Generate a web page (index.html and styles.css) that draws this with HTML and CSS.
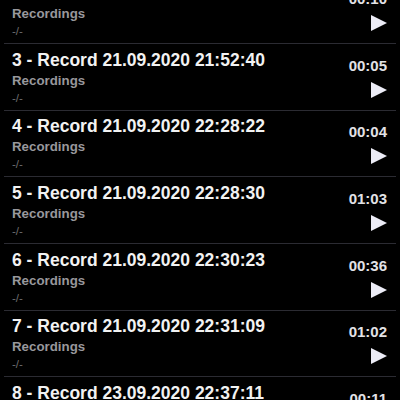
FILE: index.html
```html
<!DOCTYPE html>
<html lang="en">
<head>
    <meta charset="UTF-8">
    <meta name="viewport" content="width=device-width, initial-scale=1.0">
    <title>Recordings</title>
    <link rel="stylesheet" href="styles.css">
</head>
<body>
    <main>
        <ul class="record-list">
            <li class="record">
                <div class="record-info">
                    <div class="record-title">2 - Record 21.09.2020 21:48:12</div>
                    <div class="record-folder">Recordings</div>
                    <div class="record-note">-/-</div>
                </div>
                <div class="record-side">
                    <div class="record-time">00:10</div>
                    <button class="play" aria-label="Play"><svg viewBox="0 0 16 16"><path d="M0 0 L16 8 L0 16 Z"/></svg></button>
                </div>
            </li>
            <li class="record">
                <div class="record-info">
                    <div class="record-title">3 - Record 21.09.2020 21:52:40</div>
                    <div class="record-folder">Recordings</div>
                    <div class="record-note">-/-</div>
                </div>
                <div class="record-side">
                    <div class="record-time">00:05</div>
                    <button class="play" aria-label="Play"><svg viewBox="0 0 16 16"><path d="M0 0 L16 8 L0 16 Z"/></svg></button>
                </div>
            </li>
            <li class="record">
                <div class="record-info">
                    <div class="record-title">4 - Record 21.09.2020 22:28:22</div>
                    <div class="record-folder">Recordings</div>
                    <div class="record-note">-/-</div>
                </div>
                <div class="record-side">
                    <div class="record-time">00:04</div>
                    <button class="play" aria-label="Play"><svg viewBox="0 0 16 16"><path d="M0 0 L16 8 L0 16 Z"/></svg></button>
                </div>
            </li>
            <li class="record">
                <div class="record-info">
                    <div class="record-title">5 - Record 21.09.2020 22:28:30</div>
                    <div class="record-folder">Recordings</div>
                    <div class="record-note">-/-</div>
                </div>
                <div class="record-side">
                    <div class="record-time">01:03</div>
                    <button class="play" aria-label="Play"><svg viewBox="0 0 16 16"><path d="M0 0 L16 8 L0 16 Z"/></svg></button>
                </div>
            </li>
            <li class="record">
                <div class="record-info">
                    <div class="record-title">6 - Record 21.09.2020 22:30:23</div>
                    <div class="record-folder">Recordings</div>
                    <div class="record-note">-/-</div>
                </div>
                <div class="record-side">
                    <div class="record-time">00:36</div>
                    <button class="play" aria-label="Play"><svg viewBox="0 0 16 16"><path d="M0 0 L16 8 L0 16 Z"/></svg></button>
                </div>
            </li>
            <li class="record">
                <div class="record-info">
                    <div class="record-title">7 - Record 21.09.2020 22:31:09</div>
                    <div class="record-folder">Recordings</div>
                    <div class="record-note">-/-</div>
                </div>
                <div class="record-side">
                    <div class="record-time">01:02</div>
                    <button class="play" aria-label="Play"><svg viewBox="0 0 16 16"><path d="M0 0 L16 8 L0 16 Z"/></svg></button>
                </div>
            </li>
            <li class="record">
                <div class="record-info">
                    <div class="record-title">8 - Record 23.09.2020 22:37:11</div>
                    <div class="record-folder">Recordings</div>
                    <div class="record-note">-/-</div>
                </div>
                <div class="record-side">
                    <div class="record-time">00:11</div>
                    <button class="play" aria-label="Play"><svg viewBox="0 0 16 16"><path d="M0 0 L16 8 L0 16 Z"/></svg></button>
                </div>
            </li>
        </ul>
    </main>
</body>
</html>
```

FILE: styles.css
```css
html, body {
    margin: 0;
    padding: 0;
    background-color: #000;
    height: 100%;
    overflow: hidden;
}
body {
    font-family: "Liberation Sans", Arial, sans-serif;
    color: #f2f2f2;
}
/* list is scrolled a bit, so row 2 is cut at the top */
.record-list {
    list-style: none;
    margin: -22.67px 0 0 0;
    padding: 0;
}
.record {
    display: flex;
    justify-content: space-between;
    height: 65.67px;
    margin: 0 4px;
    padding: 0 9px 0 8px;
    border-bottom: 1px solid #2b2b32;
}
.record-info {
    padding-top: 4.75px;
}
.record-title {
    font-size: 17.5px;
    font-weight: bold;
    line-height: 22px;
    white-space: nowrap;
}
.record-folder {
    font-size: 13.3px;
    font-weight: bold;
    line-height: 20px;
    color: #98989c;
}
.record-note {
    font-size: 11.5px;
    line-height: 14px;
    color: #6e6e72;
}
.record-side {
    display: flex;
    flex-direction: column;
    align-items: flex-end;
    padding-top: 11.8px;
}
.record-time {
    font-size: 15px;
    font-weight: bold;
    line-height: 20px;
    color: #e2e2e6;
}
.play {
    margin-top: 6px;
    padding: 0;
    border: none;
    background: none;
    width: 16px;
    height: 16px;
    cursor: pointer;
}
.play svg {
    display: block;
    width: 16px;
    height: 16px;
    fill: #ececf6;
}
```
